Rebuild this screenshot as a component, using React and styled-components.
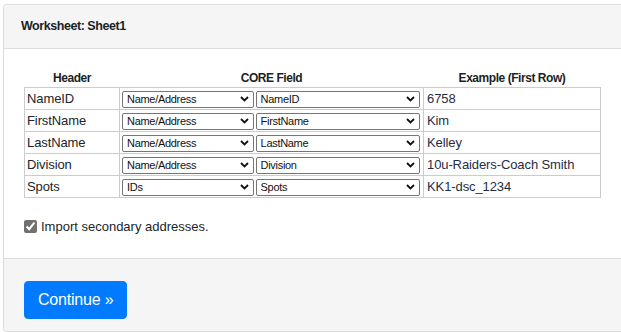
import React from "react";
import styled, { createGlobalStyle } from "styled-components";

const Global = createGlobalStyle`
  html, body { margin: 0; padding: 0; background: #fff; overflow: hidden; }
  body { font-family: "Liberation Sans", Arial, sans-serif; color: #212529; }
`;

const Card = styled.div`
  margin: 4px 0 0 3px;
  border: 1px solid #dcdcdc;
  border-right: none;
  border-radius: 4px 0 0 4px;
  background: #fff;
  overflow: hidden;
`;

const CardHeader = styled.div`
  background: #f5f5f5;
  border-bottom: 1px solid #dcdcdc;
  padding: 13px 17px;
  height: 17px;
`;

const Title = styled.h1`
  margin: 0;
  font-size: 12.5px;
  line-height: 17px;
  font-weight: bold;
  letter-spacing: -0.45px;
  color: #1c1f24;
`;

const CardBody = styled.div`
  padding: 21px 20px 22px;
`;

const Table = styled.table`
  border-collapse: collapse;
  table-layout: fixed;
  width: 576px;
  font-size: 13px;
  letter-spacing: -0.1px;
`;

const Th = styled.th`
  font-size: 12px;
  font-weight: bold;
  letter-spacing: -0.45px;
  line-height: 17px;
  height: 17px;
  padding: 0 3px;
  text-align: center;
  color: #1c1f24;
`;

const Td = styled.td`
  border: 1px solid #cccccc;
  padding: 2px 3px 2px 2px;
  height: 17px;
  line-height: 17px;
  white-space: nowrap;
  color: ${(p) => (p.$example ? "#1f2d45" : "#212529")};
  ${(p) => p.$example && "padding-left: 3px;"}
`;

const SelectPair = styled.div`
  display: flex;
  gap: 2px;
`;

const SelectWrap = styled.div`
  position: relative;
  width: ${(p) => p.$w}px;
  height: 17px;
`;

const Select = styled.select`
  appearance: none;
  -webkit-appearance: none;
  width: 100%;
  height: 17px;
  margin: 0;
  padding: 0 16px 0 4px;
  border: 1px solid #767676;
  border-radius: 2px;
  background: #fff;
  font-family: "Liberation Sans", Arial, sans-serif;
  font-size: 11px;
  letter-spacing: -0.3px;
  color: #111;
  line-height: 15px;
  box-sizing: border-box;
`;

const Chevron = styled.svg`
  position: absolute;
  right: 5px;
  top: 6px;
  width: 9px;
  height: 6px;
  pointer-events: none;
`;

const OptionRow = styled.label`
  display: flex;
  align-items: center;
  gap: 4px;
  margin-top: 18px;
  height: 20px;
  font-size: 13px;
  color: #212529;
`;

const Check = styled.input`
  width: 13px;
  height: 13px;
  margin: 0;
  accent-color: #707070;
`;

const CardFooter = styled.div`
  background: #f5f5f5;
  border-top: 1px solid #dcdcdc;
  padding: 22px 20px 12px;
`;

const Button = styled.button`
  background: #007bff;
  color: #fff;
  border: 1px solid #007bff;
  border-radius: 4px;
  font-family: "Liberation Sans", Arial, sans-serif;
  font-size: 16px;
  line-height: 24px;
  padding: 6px 13px;
  letter-spacing: -0.2px;
  cursor: pointer;
`;

const groups = ["Name/Address", "IDs"];
const fields = ["NameID", "FirstName", "LastName", "Division", "Spots"];

const rows = [
  { header: "NameID", group: "Name/Address", field: "NameID", example: "6758" },
  { header: "FirstName", group: "Name/Address", field: "FirstName", example: "Kim" },
  { header: "LastName", group: "Name/Address", field: "LastName", example: "Kelley" },
  { header: "Division", group: "Name/Address", field: "Division", example: "10u-Raiders-Coach Smith" },
  { header: "Spots", group: "IDs", field: "Spots", example: "KK1-dsc_1234" },
];

function Dropdown({ w, value, options }) {
  return (
    <SelectWrap $w={w}>
      <Select defaultValue={value}>
        {options.map((o) => (
          <option key={o}>{o}</option>
        ))}
      </Select>
      <Chevron viewBox="0 0 9 6">
        <path d="M1 1 L4.5 4.5 L8 1" fill="none" stroke="#111" strokeWidth="1.8" />
      </Chevron>
    </SelectWrap>
  );
}

export default function App() {
  return (
    <>
      <Global />
      <Card>
        <CardHeader>
          <Title>Worksheet: Sheet1</Title>
        </CardHeader>
        <CardBody>
          <Table>
            <colgroup>
              <col style={{ width: 95 }} />
              <col style={{ width: 304 }} />
              <col style={{ width: 177 }} />
            </colgroup>
            <thead>
              <tr>
                <Th>Header</Th>
                <Th>CORE Field</Th>
                <Th>Example (First Row)</Th>
              </tr>
            </thead>
            <tbody>
              {rows.map((r) => (
                <tr key={r.header}>
                  <Td>{r.header}</Td>
                  <Td>
                    <SelectPair>
                      <Dropdown w={132} value={r.group} options={groups} />
                      <Dropdown w={165} value={r.field} options={fields} />
                    </SelectPair>
                  </Td>
                  <Td $example>{r.example}</Td>
                </tr>
              ))}
            </tbody>
          </Table>
          <OptionRow>
            <Check type="checkbox" defaultChecked />
            Import secondary addresses.
          </OptionRow>
        </CardBody>
        <CardFooter>
          <Button>Continue »</Button>
        </CardFooter>
      </Card>
    </>
  );
}
